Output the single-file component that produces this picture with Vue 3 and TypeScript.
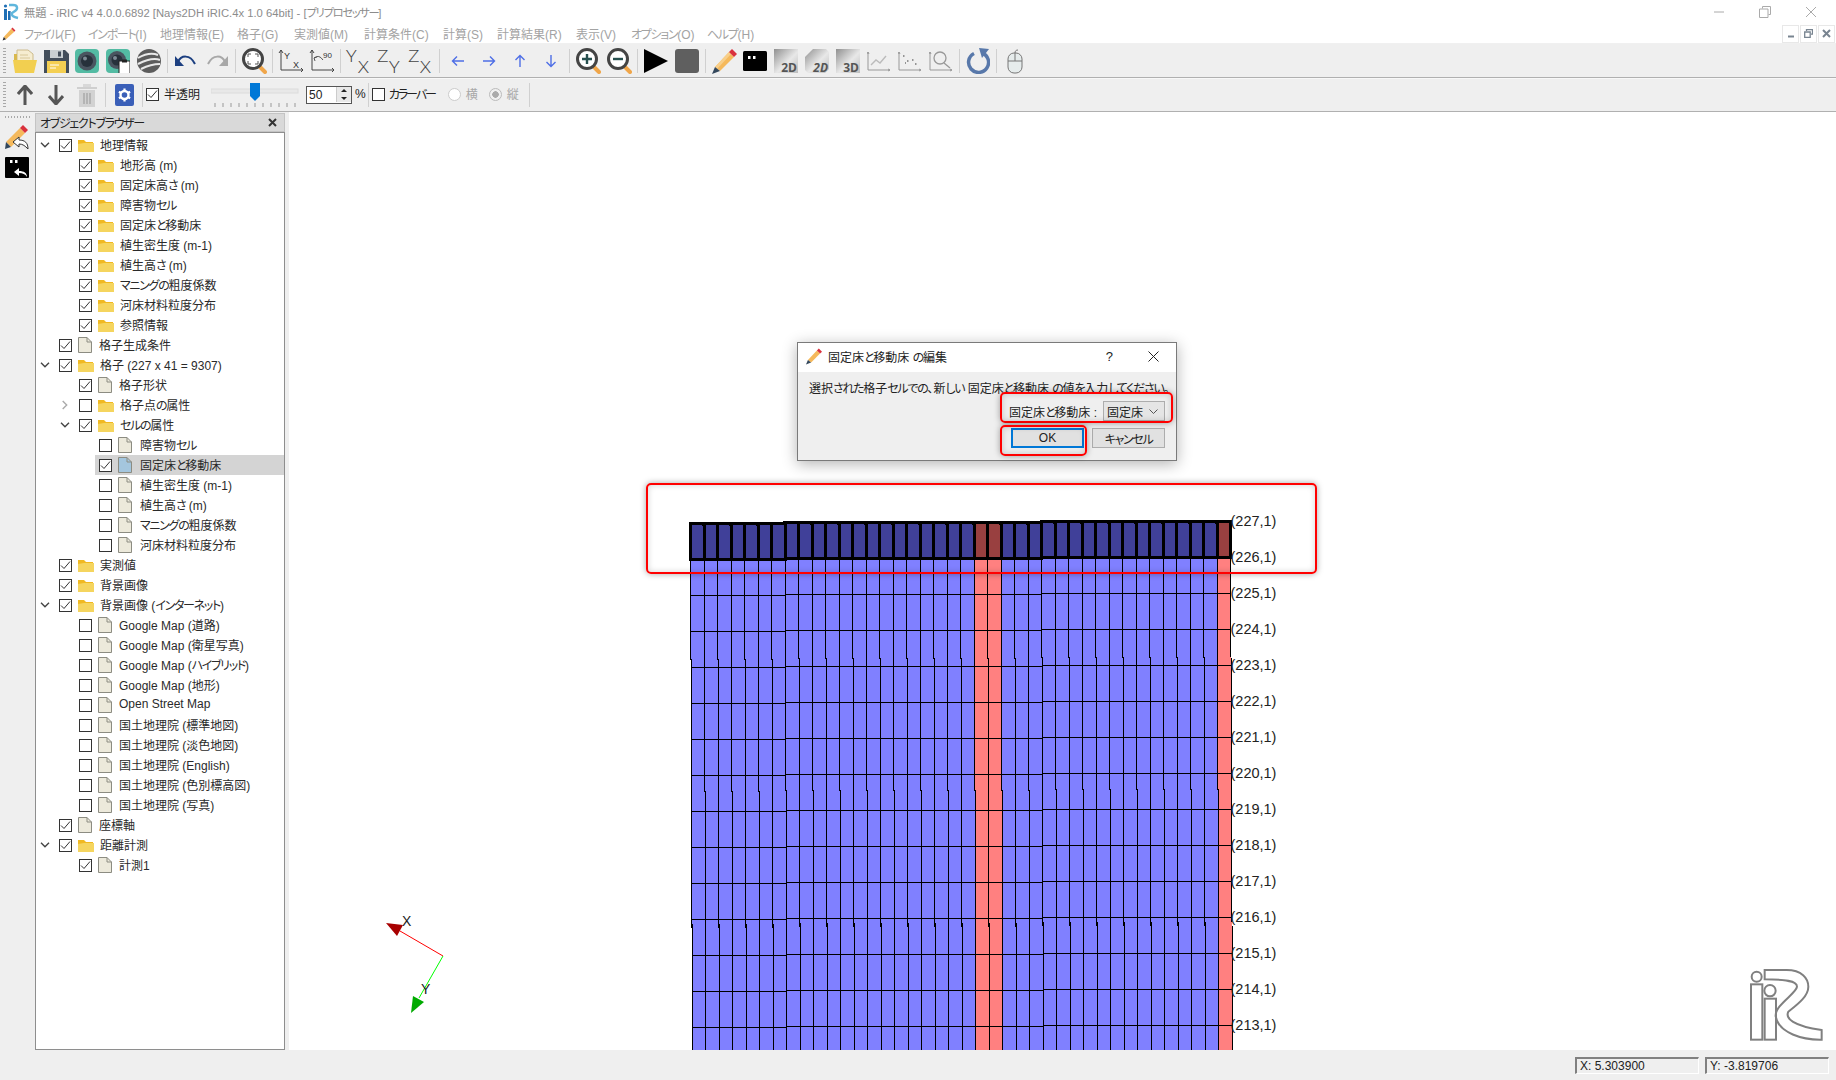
<script setup lang="ts">
import { computed } from 'vue'

interface TreeRow {
  label: string
  depth: number
  icon: 'folder' | 'doc'
  checked: boolean
  arrow?: 'down' | 'right'
  selected?: boolean
}

const menus = ['ファイル(F)', 'インポート(I)', '地理情報(E)', '格子(G)', '実測値(M)', '計算条件(C)', '計算(S)', '計算結果(R)', '表示(V)', 'オプション(O)', 'ヘルプ(H)']

const f = (label: string, depth: number, checked = true, arrow?: 'down' | 'right'): TreeRow => ({ label, depth, icon: 'folder', checked, arrow })
const d = (label: string, depth: number, checked = false): TreeRow => ({ label, depth, icon: 'doc', checked })

const rows: TreeRow[] = [
  f('地理情報', 0, true, 'down'),
  f('地形高 (m)', 1),
  f('固定床高さ (m)', 1),
  f('障害物セル', 1),
  f('固定床と移動床', 1),
  f('植生密生度 (m-1)', 1),
  f('植生高さ (m)', 1),
  f('マニングの粗度係数', 1),
  f('河床材料粒度分布', 1),
  f('参照情報', 1),
  d('格子生成条件', 0, true),
  f('格子 (227 x 41 = 9307)', 0, true, 'down'),
  d('格子形状', 1, true),
  f('格子点の属性', 1, false, 'right'),
  f('セルの属性', 1, true, 'down'),
  d('障害物セル', 2),
  { ...d('固定床と移動床', 2, true), selected: true },
  d('植生密生度 (m-1)', 2),
  d('植生高さ (m)', 2),
  d('マニングの粗度係数', 2),
  d('河床材料粒度分布', 2),
  f('実測値', 0),
  f('背景画像', 0),
  f('背景画像 (インターネット)', 0, true, 'down'),
  d('Google Map (道路)', 1),
  d('Google Map (衛星写真)', 1),
  d('Google Map (ハイブリッド)', 1),
  d('Google Map (地形)', 1),
  d('Open Street Map', 1),
  d('国土地理院 (標準地図)', 1),
  d('国土地理院 (淡色地図)', 1),
  d('国土地理院 (English)', 1),
  d('国土地理院 (色別標高図)', 1),
  d('国土地理院 (写真)', 1),
  d('座標軸', 0, true),
  f('距離計測', 0, true, 'down'),
  d('計測1', 1, true),
]

// kana sits narrower than the CJK font draws it, so runs of it get tighter tracking
const runs = (s: string) =>
  s
    .split(/([\u3041-\u30ff]+)/)
    .filter(Boolean)
    .map((t) => ({ t, kana: /[\u3041-\u30ff]/.test(t) }))

// grid geometry, in page pixels
const xAt = (c: number, k: number) => 690.5 + 13.5 * c + k * 0.135
const tier = (c: number) => (c < 7 ? 2 : c < 26 ? 1 : 0)
const yAt = (c: number, k: number) => 521 + 36 * k + tier(c)
const redCols = [21, 22, 39]

const cellPoints = (c: number, k: number) =>
  [
    [xAt(c, k), yAt(c, k)],
    [xAt(c + 1, k), yAt(c, k)],
    [xAt(c + 1, k + 1), yAt(c, k + 1)],
    [xAt(c, k + 1), yAt(c, k + 1)],
  ]
    .map((p) => p.join(','))
    .join(' ')

const cells = computed(() => {
  const out: { key: string; points: string; fill: string }[] = []
  for (let k = 1; k < 15; k++) {
    for (let c = 0; c < 40; c++) {
      out.push({ key: `${c}-${k}`, points: cellPoints(c, k), fill: redCols.includes(c) ? '#ff8080' : '#8080ff' })
    }
  }
  return out
})

const selectedCells = computed(() => {
  const out: { key: string; points: string; fill: string }[] = []
  for (let c = 0; c < 40; c++) {
    out.push({ key: `s${c}`, points: cellPoints(c, 0), fill: redCols.includes(c) ? '#994040' : '#404099' })
  }
  return out
})

const labels = Array.from({ length: 15 }, (_, k) => ({ text: `(${227 - k},1)`, y: 526 + 36 * k }))
const ticks = Array.from({ length: 11 }, (_, i) => 4 + i * 8)
</script>

<template>
  <div class="app">
    <header class="titlebar">
      <svg class="app-icon" width="18" height="18" viewBox="0 0 18 18">
        <circle cx="3.5" cy="3" r="1.6" fill="#1f6fb5" />
        <rect x="2" y="6" width="3" height="11" fill="#1f6fb5" />
        <rect x="6" y="8" width="2.6" height="9" fill="#1f6fb5" />
        <path d="M7 2h4c5 0 5 4 2 6l-3 2c-1 3 2 4 6 5" fill="none" stroke="#5fb6dc" stroke-width="2.4" />
      </svg>
      <span class="title-text"><span v-for="(p, j) in runs('無題 - iRIC v4 4.0.0.6892 [Nays2DH iRIC.4x 1.0 64bit] - [プリプロセッサー]')" :key="j" :class="{ kana: p.kana }">{{ p.t }}</span></span>
      <div class="win-btns">
        <span class="win-btn"><svg width="12" height="12" viewBox="0 0 12 12"><path d="M1 6h10" stroke="#aaa" /></svg></span>
        <span class="win-btn"><svg width="12" height="12" viewBox="0 0 12 12"><path d="M3.5 2.500V.5h8v8h-2M.5 3h8.500v8.500H.5z" fill="none" stroke="#aaa" /></svg></span>
        <span class="win-btn"><svg width="12" height="12" viewBox="0 0 12 12"><path d="M1 1l10 10M11 1L1 11" stroke="#aaa" /></svg></span>
      </div>
    </header>

    <nav class="menubar">
      <svg class="menu-pencil" width="14" height="14" viewBox="0 0 24 24">
        <path d="M3 17L16 3l5 5L7 21z" fill="#f5b95c" />
        <path d="M16 3l2-2 5 5-2 2z" fill="#d9313d" />
        <path d="M3 17l4 4-6 2z" fill="#333" />
      </svg>
      <div class="menus">
        <span v-for="m in menus" :key="m" class="menu-item"><span v-for="(p, j) in runs(m)" :key="j" :class="{ kana: p.kana }">{{ p.t }}</span></span>
      </div>
      <div class="mdi-btns">
        <span class="mdi-btn"><svg width="8" height="8" viewBox="0 0 8 8"><path d="M1 6.500h6" stroke="#788490" stroke-width="2" /></svg></span>
        <span class="mdi-btn"><svg width="9" height="9" viewBox="0 0 9 9"><path d="M2.500 2V.7h6v4.500H7M.7 3h5.500v5.300H.7z" fill="none" stroke="#788490" stroke-width="1.300" /></svg></span>
        <span class="mdi-btn"><svg width="9" height="9" viewBox="0 0 9 9"><path d="M1 1l7 7M8 1L1 8" stroke="#788490" stroke-width="2" /></svg></span>
      </div>
    </nav>

    <div class="toolbar first">
      <i class="grip"></i>
      <button class="tb">
        <svg width="26" height="26" viewBox="0 0 26 26">
          <path d="M5 2h11l5 4v8H5z" fill="#f6edd0" stroke="#cdbb8c" />
          <path d="M8 7h8M8 10h10" stroke="#d8c89a" />
          <path d="M2 6h3v8H2z" fill="#d9b94f" />
          <path d="M1 12h24l-3 13H3z" fill="#f2cf50" />
        </svg>
      </button>
      <button class="tb">
        <svg width="25" height="24" viewBox="0 0 25 24">
          <path d="M0 1h21l4 4v19H0z" fill="#434e5b" />
          <rect x="6" y="1" width="13" height="8" fill="#c9cfd2" />
          <rect x="14" y="2.500" width="3" height="5" fill="#434e5b" />
          <rect x="3" y="12" width="19" height="12" fill="#f4cf52" />
          <path d="M6 16h9M6 19h6" stroke="#fff" />
        </svg>
      </button>
      <button class="tb">
        <svg width="24" height="24" viewBox="0 0 24 24">
          <rect width="24" height="24" rx="4" fill="#53bba3" />
          <circle cx="12" cy="12" r="9.500" fill="#4a5560" />
          <circle cx="12" cy="12" r="6" fill="#27313b" />
          <circle cx="10" cy="9.500" r="2" fill="#7d8a94" />
        </svg>
      </button>
      <button class="tb">
        <svg width="24" height="24" viewBox="0 0 24 24">
          <rect width="24" height="24" rx="4" fill="#53bba3" />
          <circle cx="11" cy="11" r="9" fill="#4a5560" />
          <circle cx="11" cy="11" r="5.500" fill="#27313b" />
          <circle cx="9" cy="9" r="2" fill="#7d8a94" />
          <rect x="13" y="12" width="11" height="13" fill="#fff" stroke="#222" />
          <rect x="16" y="10.500" width="5" height="3" fill="#222" />
        </svg>
      </button>
      <button class="tb">
        <svg width="24" height="24" viewBox="0 0 24 24">
          <circle cx="12" cy="12" r="12" fill="#5c5c5c" />
          <path d="M1 9c7-4 15-5 20-3M1 15c8-4 17-6 22-4M4 20c6-3 13-5 19-5" fill="none" stroke="#e8e8e8" stroke-width="2" />
        </svg>
      </button>
      <i class="sep"></i>
      <button class="tb">
        <svg width="22" height="16" viewBox="0 0 22 16">
          <path d="M3 9C6 2 15 1 20 11" fill="none" stroke="#1c3f80" stroke-width="2" />
          <path d="M0 3v10h9z" fill="#1c3f80" />
        </svg>
      </button>
      <button class="tb">
        <svg width="22" height="16" viewBox="0 0 22 16">
          <path d="M19 9C16 2 7 1 2 11" fill="none" stroke="#a8a8a8" stroke-width="2" />
          <path d="M22 3v10h-9z" fill="#a8a8a8" />
        </svg>
      </button>
      <i class="sep"></i>
      <button class="tb">
        <svg width="25" height="26" viewBox="0 0 25 26">
          <path d="M17 18l6 6" stroke="#f0a64a" stroke-width="4" stroke-linecap="round" />
          <circle cx="11" cy="11" r="9.500" fill="#fff" stroke="#444" stroke-width="3" />
          <path d="M6 9V6h3M13 6h3v3M16 13v3h-3M9 16H6v-3" fill="none" stroke="#555" />
        </svg>
      </button>
      <i class="sep"></i>
      <button class="tb">
        <svg width="26" height="24" viewBox="0 0 26 24" class="free">
          <path d="M3 1v20h22M1 4l2-3 2 3M23 19l2 2-2 2" fill="none" stroke="#444" />
          <text x="6" y="10" class="ax-t">Y</text>
          <text x="15" y="19" class="ax-t">X</text>
        </svg>
      </button>
      <button class="tb">
        <svg width="26" height="24" viewBox="0 0 26 24" class="free">
          <path d="M3 1v20h22M1 4l2-3 2 3M23 19l2 2-2 2" fill="none" stroke="#444" />
          <path d="M5 9q5-4 9 2M5 9l3-1M5 9l1 3" fill="none" stroke="#555" />
          <text x="14" y="9" class="ax-s">90</text>
        </svg>
      </button>
      <i class="sep"></i>
      <button class="tb">
        <svg width="26" height="26" viewBox="0 0 26 26" class="free"><text transform="translate(0 14) scale(1.25 1)" class="big">Y</text><text transform="translate(12 25) scale(1.25 1)" class="big">X</text></svg>
      </button>
      <button class="tb">
        <svg width="26" height="26" viewBox="0 0 26 26" class="free"><text transform="translate(0 14) scale(1.25 1)" class="big">Z</text><text transform="translate(12 25) scale(1.25 1)" class="big">Y</text></svg>
      </button>
      <button class="tb">
        <svg width="26" height="26" viewBox="0 0 26 26" class="free"><text transform="translate(0 14) scale(1.25 1)" class="big">Z</text><text transform="translate(12 25) scale(1.25 1)" class="big">X</text></svg>
      </button>
      <i class="sep"></i>
      <button class="tb"><svg width="14" height="12" viewBox="0 0 14 12"><path d="M13 6H2M6 1.500L1.500 6 6 10.500" fill="none" stroke="#4f6fe6" stroke-width="1.400" /></svg></button>
      <button class="tb"><svg width="14" height="12" viewBox="0 0 14 12"><path d="M1 6h11M8 1.500L12.500 6 8 10.500" fill="none" stroke="#4f6fe6" stroke-width="1.400" /></svg></button>
      <button class="tb"><svg width="12" height="14" viewBox="0 0 12 14"><path d="M6 13V2M1.500 6L6 1.500 10.500 6" fill="none" stroke="#4f6fe6" stroke-width="1.400" /></svg></button>
      <button class="tb"><svg width="12" height="14" viewBox="0 0 12 14"><path d="M6 1v11M1.500 8L6 12.500 10.500 8" fill="none" stroke="#4f6fe6" stroke-width="1.400" /></svg></button>
      <i class="sep"></i>
      <button class="tb">
        <svg width="25" height="26" viewBox="0 0 25 26">
          <path d="M17 18l6 6" stroke="#f0a64a" stroke-width="4" stroke-linecap="round" />
          <circle cx="11" cy="11" r="9.500" fill="#fff" stroke="#444" stroke-width="3" />
          <path d="M11 6v10M6 11h10" stroke="#27504f" stroke-width="2.400" />
        </svg>
      </button>
      <button class="tb">
        <svg width="25" height="26" viewBox="0 0 25 26">
          <path d="M17 18l6 6" stroke="#f0a64a" stroke-width="4" stroke-linecap="round" />
          <circle cx="11" cy="11" r="9.500" fill="#fff" stroke="#444" stroke-width="3" />
          <path d="M6 11h10" stroke="#27504f" stroke-width="2.400" />
        </svg>
      </button>
      <i class="sep"></i>
      <button class="tb"><svg width="24" height="24" viewBox="0 0 24 24"><path d="M0 0l24 12L0 24z" fill="#000" /></svg></button>
      <button class="tb"><svg width="24" height="24" viewBox="0 0 24 24"><rect width="24" height="24" rx="3" fill="#5f5f5f" /></svg></button>
      <i class="sep"></i>
      <button class="tb">
        <svg width="25" height="25" viewBox="0 0 25 25">
          <path d="M3 18L17 3l5 5L8 22z" fill="#f5b95c" />
          <path d="M3 18L17 3l2 2L5 20z" fill="#f8cf8a" />
          <path d="M17 3l3-3 5 5-3 3z" fill="#d9313d" />
          <path d="M3 18l5 4-8 3z" fill="#33475c" />
        </svg>
      </button>
      <button class="tb"><svg width="24" height="20" viewBox="0 0 24 20"><rect width="24" height="20" rx="1.500" fill="#000" /><rect x="5" y="5" width="2.500" height="3" fill="#fff" /><rect x="10" y="5" width="2.500" height="3" fill="#fff" /></svg></button>
      <button class="tb">
        <svg width="24" height="24" viewBox="0 0 24 24" class="free">
          <defs>
            <linearGradient id="g2d" x1="0" y1="0" x2="1" y2="1">
              <stop offset="0" stop-color="#8f8f8f" />
              <stop offset=".55" stop-color="#e8e8e8" />
              <stop offset="1" stop-color="#bdbdbd" />
            </linearGradient>
          </defs>
          <rect width="24" height="24" fill="url(#g2d)" />
          <text x="23" y="23" class="dim">2D</text>
        </svg>
      </button>
      <button class="tb">
        <svg width="24" height="24" viewBox="0 0 24 24" class="free">
          <path d="M8 0h13l3 3v17l-4 4H3l-3-3V8z" fill="url(#g2d)" />
          <text x="23" y="23" class="dim tilt">2D</text>
        </svg>
      </button>
      <button class="tb">
        <svg width="24" height="24" viewBox="0 0 24 24" class="free">
          <rect width="24" height="24" fill="url(#g2d)" />
          <text x="23" y="23" class="dim">3D</text>
        </svg>
      </button>
      <button class="tb">
        <svg width="24" height="24" viewBox="0 0 24 24" fill="none">
          <path d="M1 3v18h22M0 5l1-2 1 2M21 20l2 1-2 1" stroke="#999" />
          <path d="M4 16l5-5 4 3 6-7" stroke="#bbb" stroke-width="1.400" />
        </svg>
      </button>
      <button class="tb">
        <svg width="24" height="24" viewBox="0 0 24 24" fill="none">
          <path d="M1 3v18h22M0 5l1-2 1 2M21 20l2 1-2 1" stroke="#999" />
          <path d="M5 7h1.500M9 12h1.500M14 11h1.500M17 15h1.500M7 14h1" stroke="#777" stroke-width="1.500" />
        </svg>
      </button>
      <button class="tb">
        <svg width="24" height="24" viewBox="0 0 24 24" fill="none">
          <path d="M1 3v18h22M0 5l1-2 1 2M21 20l2 1-2 1" stroke="#999" />
          <circle cx="11" cy="9" r="6" stroke="#999" stroke-width="1.300" />
          <path d="M15 14l6 5" stroke="#999" stroke-width="1.300" />
        </svg>
      </button>
      <i class="sep"></i>
      <button class="tb">
        <svg width="24" height="26" viewBox="0 0 24 26" fill="none">
          <path d="M8 5.500A10 10 0 1 0 16 5" stroke="#5878aa" stroke-width="3.500" />
          <path d="M13 0l10 1-7 9z" fill="#5878aa" />
        </svg>
      </button>
      <i class="sep"></i>
      <button class="tb">
        <svg width="16" height="26" viewBox="0 0 16 26">
          <path d="M8 5c0-2 1-3 3-3" fill="none" stroke="#777" />
          <rect x="1" y="5" width="14" height="20" rx="6" fill="#e6ecec" stroke="#777" />
          <path d="M1 13h14M8 5v8" stroke="#777" />
        </svg>
      </button>
    </div>

    <div class="toolbar second">
      <i class="grip"></i>
      <button class="tb"><svg width="16" height="20" viewBox="0 0 16 20"><path d="M8 20V3M1 9l7-8 7 8" fill="none" stroke="#555" stroke-width="3" /></svg></button>
      <button class="tb"><svg width="16" height="20" viewBox="0 0 16 20"><path d="M8 0v17M1 11l7 8 7-8" fill="none" stroke="#555" stroke-width="3" /></svg></button>
      <button class="tb">
        <svg width="20" height="24" viewBox="0 0 20 24">
          <rect x="0" y="4" width="20" height="2" fill="#cfcfcf" />
          <rect x="6" y="1" width="8" height="3" fill="#d8d8d8" />
          <rect x="2" y="7" width="16" height="17" fill="#d2d2d2" />
          <path d="M7 10v11M10 10v11M13 10v11" stroke="#aaa" stroke-width="1.500" />
        </svg>
      </button>
      <i class="sep"></i>
      <button class="tb">
        <svg width="19" height="22" viewBox="0 0 19 22">
          <rect width="19" height="22" rx="2" fill="#3a5fb8" />
          <circle cx="9.500" cy="11" r="4" fill="none" stroke="#fff" stroke-width="2.400" />
          <path d="M9.500 4.500v3M9.500 14.500v3M3.900 7.800l2.600 1.500M12.500 12.700l2.600 1.500M3.900 14.200l2.600-1.500M12.500 9.300l2.600-1.500" stroke="#fff" stroke-width="2.200" />
        </svg>
      </button>
      <i class="sep"></i>
      <span class="box checked lead">
        <svg width="11" height="11" viewBox="0 0 11 11"><path d="M1 5.500l3 3 6-7" fill="none" stroke="#333" /></svg>
      </span>
      <span class="tb-label half">半透明</span>
      <svg class="slider" width="88" height="26" viewBox="0 0 88 26">
        <rect x="0" y="7" width="87" height="4" fill="#e8e8e8" stroke="#dcdcdc" />
        <path d="M39 1h10v13l-5 5-5-5z" fill="#0078d7" />
        <path v-for="t in ticks" :key="t" :d="`M${t} 21v4`" stroke="#999" />
      </svg>
      <span class="spin">
        <span class="spin-val">50</span>
        <span class="spin-btns">
          <svg width="14" height="7" viewBox="0 0 14 7"><path d="M4 5l3-3 3 3z" fill="#222" /></svg>
          <svg width="14" height="7" viewBox="0 0 14 7"><path d="M4 2l3 3 3-3z" fill="#222" /></svg>
        </span>
      </span>
      <span class="tb-label pct">%</span>
      <i class="sep small"></i>
      <span class="box color"></span>
      <span class="tb-label colorbar"><span class="kana">カラーバー</span></span>
      <span class="radio"></span>
      <span class="tb-label off">横</span>
      <span class="radio on"></span>
      <span class="tb-label off">縦</span>
      <i class="sep end"></i>
    </div>

    <main class="workspace">
      <aside class="dock-icons">
        <i class="dock-grip"></i>
        <svg width="24" height="25" viewBox="0 0 24 25">
          <path d="M1 17L15 3l5 5L6 22z" fill="#f5b95c" />
          <path d="M15 3l3-3 5 5-3 3z" fill="#d9313d" />
          <path d="M1 17l5 5-6 2z" fill="#33475c" />
          <path d="M23 24c0-6-3-9-9-9v-3l-6 5 6 5v-3c4 0 6 2 9 5z" fill="#fff" stroke="#333" />
        </svg>
        <svg class="term-back" width="24" height="21" viewBox="0 0 24 21">
          <rect width="24" height="21" rx="1" fill="#000" />
          <rect x="5" y="3" width="2.500" height="3" fill="#fff" />
          <rect x="10" y="3" width="2.500" height="3" fill="#fff" />
          <path d="M22 20c0-4-3-6-8-6v-3l-5 4 5 4v-3c4 0 6 1 8 4z" fill="#fff" />
        </svg>
      </aside>

      <section class="browser">
        <header class="browser-head">
          <span><span v-for="(p, j) in runs('オブジェクトブラウザー')" :key="j" class="kana">{{ p.t }}</span></span>
          <svg width="9" height="9" viewBox="0 0 9 9"><path d="M1 1l7 7M8 1L1 8" stroke="#333" stroke-width="2" /></svg>
        </header>
        <ul class="tree">
          <li v-for="(r, i) in rows" :key="i" class="row" :class="`d${r.depth}`">
            <span class="arrow">
              <svg v-if="r.arrow === 'down'" width="10" height="6" viewBox="0 0 10 6"><path d="M1 .7l4 4 4-4" fill="none" stroke="#444" stroke-width="1.400" /></svg>
              <svg v-if="r.arrow === 'right'" width="6" height="10" viewBox="0 0 6 10"><path d="M.7 1l4 4-4 4" fill="none" stroke="#aaa" stroke-width="1.400" /></svg>
            </span>
            <span class="row-body" :class="{ selected: r.selected }">
              <span class="box">
                <svg v-if="r.checked" width="11" height="11" viewBox="0 0 11 11"><path d="M1 5.500l3 3 6-7" fill="none" stroke="#333" /></svg>
              </span>
              <svg v-if="r.icon === 'folder'" class="node-icon" width="16" height="13" viewBox="0 0 16 13">
                <path d="M0 13V1h6l2 2h7v10z" fill="#f0b922" />
                <path d="M0 13V5l6-1h10v9z" fill="#f5d55f" />
              </svg>
              <svg v-else class="node-doc" width="14" height="16" viewBox="0 0 14 16">
                <path d="M.5.500h8.500l4.500 4.500v10.500H.5z" :fill="r.selected ? '#a4c6de' : '#ece9db'" stroke="#8c8c82" />
                <path d="M9 .5V5h4.500" fill="none" stroke="#8c8c82" />
              </svg>
              <span class="row-label"><span v-for="(p, j) in runs(r.label)" :key="j" :class="{ kana: p.kana }">{{ p.t }}</span></span>
            </span>
          </li>
        </ul>
      </section>
      <div class="dock-gap"></div>

      <div class="viewport">
        <svg class="scene" width="1547" height="938" viewBox="289 112 1547 938">
          <polygon v-for="c in cells" :key="c.key" :points="c.points" :fill="c.fill" stroke="#000" stroke-width="1" shape-rendering="crispEdges" />
          <polygon v-for="c in selectedCells" :key="c.key" :points="c.points" :fill="c.fill" stroke="#000" stroke-width="3" shape-rendering="crispEdges" />
          <text v-for="l in labels" :key="l.text" x="1230.500" :y="l.y" class="node-label">{{ l.text }}</text>

          <path d="M443 956L400 931" stroke="#ff0000" />
          <path d="M443 956L419 998" stroke="#00ff00" />
          <polygon points="386,923 403,925 397,936" fill="#a80000" />
          <polygon points="413,996 424,1002 411,1013" fill="#00aa00" />
          <text x="402" y="926" class="axis-label">X</text>
          <text x="421" y="994" class="axis-label">Y</text>
        </svg>

        <svg class="logo" width="296" height="100" viewBox="0 0 888 300" fill="none" stroke="#808080" stroke-width="6">
          <circle cx="650" cy="80" r="15" />
          <rect x="633" y="103" width="34" height="166" />
          <circle cx="690" cy="122" r="17" />
          <rect x="674" y="146" width="34" height="123" />
          <path d="M674 60H740C785 60 805 85 805 110C805 140 770 165 745 185C735 205 760 228 845 240V269C790 270 715 250 707 198C705 165 770 130 771 110C771 92 735 88 674 88Z" />
        </svg>

        <div class="note note-top"></div>

        <div class="dialog">
          <div class="dialog-title">
            <svg width="16" height="17" viewBox="0 0 25 25">
              <path d="M3 18L17 3l5 5L8 22z" fill="#f5b95c" />
              <path d="M17 3l3-3 5 5-3 3z" fill="#d9313d" />
              <path d="M3 18l5 4-8 3z" fill="#33475c" />
            </svg>
            <span class="dialog-name"><span v-for="(p, j) in runs('固定床と移動床 の編集')" :key="j" :class="{ kana: p.kana }">{{ p.t }}</span></span>
            <span class="dialog-help">?</span>
            <svg class="dialog-close" width="11" height="11" viewBox="0 0 11 11"><path d="M.5.5l10 10M10.500.5l-10 10" stroke="#222" /></svg>
          </div>
          <div class="dialog-body">
            <p class="prompt"><span v-for="(p, j) in runs('選択された格子セルでの、新しい 固定床と移動床 の値を入力してください。')" :key="j" :class="{ kana: p.kana }">{{ p.t }}</span></p>
            <div class="form-row">
              <span><span v-for="(p, j) in runs('固定床と移動床 :')" :key="j" :class="{ kana: p.kana }">{{ p.t }}</span></span>
              <span class="combo">
                <span>固定床</span>
                <svg width="9" height="5" viewBox="0 0 9 5"><path d="M.5.5l4 4 4-4" fill="none" stroke="#555" /></svg>
              </span>
            </div>
            <div class="buttons">
              <span class="btn primary">OK</span>
              <span class="btn"><span class="kana">キャンセル</span></span>
            </div>
          </div>
        </div>

        <div class="note note-combo"></div>
        <div class="note note-ok"></div>
      </div>
    </main>

    <footer class="statusbar">
      <span class="coord">X: 5.303900</span>
      <span class="coord">Y: -3.819706</span>
    </footer>
  </div>
</template>

<style scoped>
.app {
  width: 1836px;
  height: 1080px;
  display: flex;
  flex-direction: column;
  overflow: hidden;
  background: #fff;
  color: #222;
  font-family: "Liberation Sans", "Noto Sans CJK JP", sans-serif;
  font-size: 12px;
  font-feature-settings: "palt";
}
.kana {
  letter-spacing: -1.3px;
}

.titlebar {
  height: 24px;
  display: flex;
  align-items: center;
  flex: none;
}
.app-icon {
  margin: 0 4px 0 2px;
}
.title-text {
  color: #8c8c8c;
  font-size: 11.25px;
}
.win-btns {
  margin-left: auto;
  display: flex;
  padding-right: 2px;
}
.win-btn {
  width: 46px;
  height: 20px;
  display: flex;
  align-items: center;
  justify-content: center;
}

.menubar {
  height: 20px;
  flex: none;
  display: flex;
  align-items: center;
  border-bottom: 1px solid #f0f0f0;
  box-sizing: border-box;
}
.menu-pencil {
  margin: 0 8px 0 2px;
}
.menus {
  display: grid;
  grid-template-columns: 64px 72px 77px 57px 70px 79px 54px 79px 55px 76px auto;
  color: #a3a3a3;
}
.mdi-btns {
  margin-left: auto;
  display: flex;
  gap: 1px;
  padding-right: 1px;
}
.mdi-btn {
  width: 17px;
  height: 18px;
  box-sizing: border-box;
  border: 1px solid #e8e8e8;
  display: flex;
  align-items: center;
  justify-content: center;
}

.toolbar {
  height: 34px;
  flex: none;
  box-sizing: border-box;
  display: flex;
  align-items: center;
  padding-top: 1px;
  background: #efefef;
  border-bottom: 1px solid #b0b0b0;
}
.toolbar.second {
  border-top: 1px solid #f8f8f8;
  padding: 0 0 1px;
}
.grip {
  width: 3px;
  height: 26px;
  margin: 0 3.5px 0 3px;
  background: repeating-linear-gradient(to bottom, #a8a8a8 0 1px, transparent 1px 3px);
}
.tb {
  width: 31px;
  height: 30px;
  padding: 0;
  border: none;
  background: none;
  display: flex;
  align-items: center;
  justify-content: center;
  flex: none;
}
.free {
  overflow: visible;
}
.sep {
  width: 1px;
  height: 24px;
  margin: 0 2.5px;
  background: #d0d0d0;
  flex: none;
}
.sep.small {
  margin: 0 3px 0 2px;
}
.sep.end {
  margin-left: 10px;
}
.ax-t {
  font: 9px "Liberation Sans", sans-serif;
  fill: #333;
}
.ax-s {
  font: 8px "Liberation Sans", sans-serif;
  fill: #333;
}
.big {
  font: 300 16px "Open Sans", sans-serif;
  fill: #444;
}
.dim {
  font: 700 12px "Open Sans", sans-serif;
  fill: #555;
  text-anchor: end;
}
.tilt {
  font-style: italic;
}

.box {
  width: 13px;
  height: 13px;
  box-sizing: border-box;
  border: 1px solid #333;
  background: #fff;
  display: flex;
  align-items: center;
  justify-content: center;
  flex: none;
}
.box.lead {
  margin-left: .5px;
}
.tb-label {
  white-space: nowrap;
  padding-bottom: 2px;
}
.half {
  margin-left: 5px;
  width: 47px;
}
.slider {
  flex: none;
}
.spin {
  margin-left: 7px;
  width: 46px;
  height: 18px;
  box-sizing: border-box;
  border: 1px solid #555;
  background: #fff;
  display: flex;
  justify-content: space-between;
  align-items: center;
  padding-left: 2px;
}
.spin-btns {
  display: flex;
  flex-direction: column;
  gap: 1px;
  border-left: 1px solid #ccc;
  background: #e9e9e9;
}
.spin-btns svg {
  display: block;
}
.pct {
  margin-left: 3px;
}
.colorbar {
  margin-left: 4px;
  width: 59px;
}
.colorbar .kana {
  letter-spacing: -2px;
}
.radio {
  width: 13px;
  height: 13px;
  box-sizing: border-box;
  border: 1px solid #ccc;
  border-radius: 50%;
  background: #fff;
  flex: none;
}
.radio.on {
  border-color: #bbb;
  background: radial-gradient(circle, #aaa 0 3px, #efefef 3.5px);
  margin-left: 11px;
}
.off {
  color: #a8a8a8;
  margin-left: 5px;
}

.workspace {
  flex: 1;
  min-height: 0;
  display: flex;
}
.dock-icons {
  width: 35px;
  flex: none;
  background: #efefef;
  display: flex;
  flex-direction: column;
  align-items: flex-start;
  padding-left: 5px;
  box-sizing: border-box;
}
.dock-grip {
  width: 25px;
  height: 2px;
  margin: 4px 0 7px;
  background: repeating-linear-gradient(to right, #a8a8a8 0 1px, transparent 1px 3px);
}
.term-back {
  margin-top: 7px;
}
.browser {
  width: 250px;
  flex: none;
  display: flex;
  flex-direction: column;
  background: #efefef;
  padding-top: 1px;
}
.browser-head {
  height: 19px;
  flex: none;
  box-sizing: border-box;
  background: #d9d9d9;
  border: 1px solid #c4c4c4;
  display: flex;
  align-items: center;
  justify-content: space-between;
  padding: 0 7px 0 4px;
}
.tree {
  flex: 1;
  margin: 0;
  padding: 2px 0 0;
  list-style: none;
  background: #fff;
  border: 1px solid #8e8e8e;
  box-sizing: border-box;
}
.row {
  height: 20px;
  display: flex;
  align-items: center;
}
.arrow {
  width: 10px;
  height: 20px;
  flex: none;
  display: flex;
  align-items: center;
  justify-content: center;
}
.d0 .arrow {
  margin: 0 5px 0 4px;
}
.d1 .arrow {
  margin: 0 5px 0 24px;
}
.d2 .arrow {
  margin: 0 5px 0 44px;
}
.row-body {
  flex: 1;
  height: 20px;
  display: flex;
  align-items: center;
  padding-left: 4px;
  min-width: 0;
}
.row-body.selected {
  background: #d4d4d4;
}
.node-icon {
  margin: 0 6px;
  flex: none;
}
.node-doc {
  margin: 0 7px 0 6px;
  flex: none;
}
.d2 .node-doc {
  margin-right: 8px;
}
.row-label {
  white-space: nowrap;
  color: #2a2a2a;
  padding-bottom: 2px;
}
.dock-gap {
  width: 4px;
  flex: none;
  background: #efefef;
}

.viewport {
  flex: 1;
  position: relative;
  overflow: hidden;
  background: #fff;
}
.scene {
  position: absolute;
  left: 0;
  top: 0;
}
.node-label {
  font: 14.5px "Liberation Sans", sans-serif;
  fill: #222;
}
.axis-label {
  font: 14px "Liberation Sans", sans-serif;
  fill: #222;
}
.logo {
  position: absolute;
  left: 1251px;
  top: 838px;
}

.dialog {
  position: absolute;
  left: 508px;
  top: 230px;
  width: 380px;
  height: 119px;
  box-sizing: border-box;
  border: 1px solid #7a7a7a;
  background: #efefef;
  box-shadow: 0 3px 14px rgba(0, 0, 0, .3);
}
.dialog-title {
  height: 29px;
  box-sizing: border-box;
  padding: 0 0 2px 8px;
  background: #fff;
  display: flex;
  align-items: center;
}
.dialog-name {
  margin-left: 6px;
}
.dialog-help {
  margin-left: auto;
  font-size: 13px;
}
.dialog-close {
  margin: 0 17px 0 35px;
}
.dialog-body {
  padding: 8px 11px 0;
}
.prompt {
  margin: 0;
  line-height: 18px;
  white-space: nowrap;
}
.form-row {
  display: flex;
  justify-content: flex-end;
  align-items: center;
  margin-top: 3px;
  height: 20px;
}
.combo {
  width: 62px;
  height: 20px;
  box-sizing: border-box;
  border: 1px solid #adadad;
  background: #e5e5e5;
  display: flex;
  align-items: center;
  justify-content: space-between;
  padding: 0 6px 0 3px;
  margin-left: 6px;
}
.buttons {
  display: flex;
  justify-content: flex-end;
  gap: 8px;
  margin-top: 7px;
}
.btn {
  width: 73px;
  height: 20px;
  box-sizing: border-box;
  border: 1px solid #adadad;
  background: #e1e1e1;
  display: flex;
  align-items: center;
  justify-content: center;
}
.btn.primary {
  border: 2px solid #0078d7;
}

.note {
  position: absolute;
  box-sizing: border-box;
  border: 2px solid #f00;
  border-radius: 5px;
  box-shadow: 0 0 6px rgba(0, 0, 0, .35), inset 0 0 6px rgba(0, 0, 0, .18);
}
.note-top {
  left: 357px;
  top: 371px;
  width: 671px;
  height: 91px;
}
.note-combo {
  left: 711px;
  top: 280px;
  width: 173px;
  height: 31px;
}
.note-ok {
  left: 711px;
  top: 313px;
  width: 87px;
  height: 31px;
}

.statusbar {
  height: 30px;
  flex: none;
  box-sizing: border-box;
  background: #efefef;
  display: flex;
  justify-content: flex-end;
  gap: 6px;
  padding: 7px 7px 0 0;
}
.coord {
  width: 124px;
  height: 17px;
  box-sizing: border-box;
  border-style: solid;
  border-width: 2px 1px 1px 2px;
  border-color: #808080 #fff #fff #808080;
  display: flex;
  align-items: center;
  padding-left: 3px;
}
</style>
